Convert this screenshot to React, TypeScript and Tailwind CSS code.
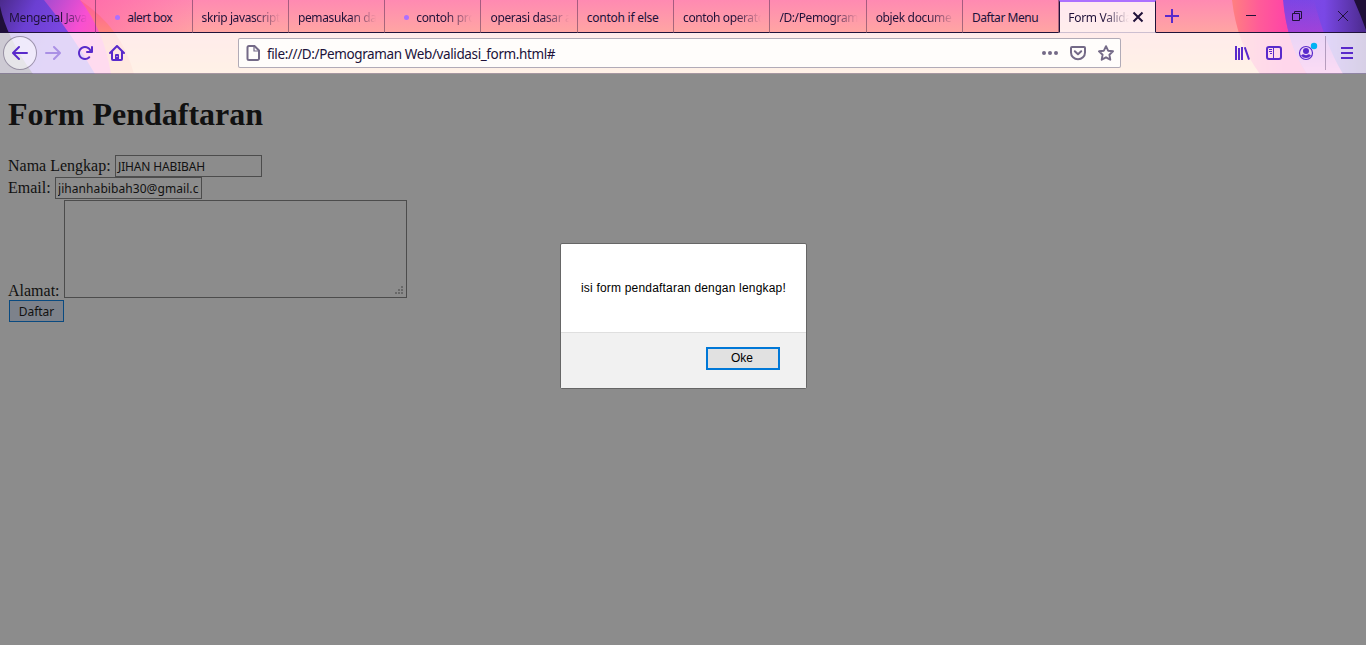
import type { ReactNode } from "react";

type Tab = { title: string; fit: string; dot?: boolean; fade?: boolean };

const tabs: Tab[] = [
  { title: "Mengenal Java", fit: "tracking-[-0.35px]", fade: true },
  { title: "alert box", fit: "tracking-[-0.55px]", dot: true },
  { title: "skrip javascript", fit: "tracking-[-0.4px]", fade: true },
  { title: "pemasukan da", fit: "tracking-[-0.35px]", fade: true },
  { title: "contoh pro", fit: "tracking-[-0.3px]", dot: true, fade: true },
  { title: "operasi dasar a", fit: "tracking-[-0.35px]", fade: true },
  { title: "contoh if else", fit: "tracking-[-0.25px]" },
  { title: "contoh operato", fit: "tracking-[-0.4px]", fade: true },
  { title: "/D:/Pemogram", fit: "tracking-[-0.4px]", fade: true },
  { title: "objek docume", fit: "tracking-[-0.35px]", fade: true },
  { title: "Daftar Menu", fit: "tracking-[-0.45px]" },
];

const fadeMask = "[mask-image:linear-gradient(to_left,transparent,black_26px)]";

function Icon({ children, className = "" }: { children: ReactNode; className?: string }) {
  return (
    <svg viewBox="0 0 16 16" width="16" height="16" fill="currentColor" className={`shrink-0 ${className}`}>
      {children}
    </svg>
  );
}

const arrow =
  "M15 7H3.414l4.293-4.293a1 1 0 0 0-1.414-1.414l-6 6a1 1 0 0 0 0 1.414l6 6a1 1 0 0 0 1.414-1.414L3.414 9H15a1 1 0 0 0 0-2z";

function ThemeBackdrop() {
  return (
    <svg className="col-start-1 row-start-1" width="1366" height="74" viewBox="0 0 1366 74">
      <defs>
        <linearGradient id="base" x1="0" y1="0" x2="0" y2="1">
          <stop offset="0" stopColor="#ff8ab2" />
          <stop offset="0.43" stopColor="#ffa5a3" />
          <stop offset="1" stopColor="#ffc08f" />
        </linearGradient>
        <linearGradient id="glow" x1="0" y1="0" x2="1" y2="0">
          <stop offset="0" stopColor="#ff5fa6" stopOpacity="0.7" />
          <stop offset="1" stopColor="#ff5fa6" stopOpacity="0" />
        </linearGradient>
        <linearGradient id="orangeL" x1="0" y1="0" x2="0" y2="1">
          <stop offset="0" stopColor="#ff5a9a" />
          <stop offset="0.4" stopColor="#ff8280" />
          <stop offset="1" stopColor="#ffa070" />
        </linearGradient>
        <linearGradient id="magentaL" gradientUnits="userSpaceOnUse" x1="50" y1="0" x2="105" y2="30">
          <stop offset="0" stopColor="#b04bd0" />
          <stop offset="0.6" stopColor="#f84fd2" />
          <stop offset="1" stopColor="#ff5cb8" />
        </linearGradient>
        <linearGradient id="violetL" gradientUnits="userSpaceOnUse" x1="0" y1="0" x2="60" y2="30">
          <stop offset="0" stopColor="#4b2a8c" />
          <stop offset="0.5" stopColor="#6b3fd2" />
          <stop offset="1" stopColor="#7a46e0" />
        </linearGradient>
        <linearGradient id="orangeR" gradientUnits="userSpaceOnUse" x1="1232" y1="0" x2="1285" y2="0">
          <stop offset="0" stopColor="#ff8080" />
          <stop offset="0.5" stopColor="#ff5c98" />
          <stop offset="1" stopColor="#ff45a6" />
        </linearGradient>
        <linearGradient id="violetR" gradientUnits="userSpaceOnUse" x1="1290" y1="0" x2="1366" y2="0">
          <stop offset="0" stopColor="#7d45e4" />
          <stop offset="0.45" stopColor="#7a48e6" />
          <stop offset="1" stopColor="#4b2a8c" />
        </linearGradient>
        <linearGradient id="pinkR" x1="0" y1="0" x2="0" y2="1">
          <stop offset="0" stopColor="#b83fd0" stopOpacity="0" />
          <stop offset="0.43" stopColor="#b83fd0" stopOpacity="0.6" />
          <stop offset="1" stopColor="#f060d0" />
        </linearGradient>
      </defs>
      <rect width="1366" height="74" fill="url(#base)" />
      <rect x="80" width="120" height="32" fill="url(#glow)" />
      <path d="M0 0H80Q122 28 134 74H0Z" fill="url(#orangeL)" />
      <path d="M0 0H80Q104 30 111 74H0Z" fill="url(#magentaL)" />
      <path d="M0 0H44Q72 34 95 74H0Z" fill="url(#violetL)" />
      <path d="M0 6Q6 36 33 74H0Z" fill="#1f0f38" />
      <path d="M1232 0Q1237 44 1260 74H1366V0Z" fill="url(#orangeR)" />
      <path d="M1283 0Q1287 44 1307 74H1366V0Z" fill="url(#violetR)" />
      <path d="M1283 0Q1287 44 1307 74H1343Q1325 44 1314 0Z" fill="url(#pinkR)" />
      <path d="M1354 0Q1361 16 1366 30V0Z" fill="#1f0f38" />
    </svg>
  );
}

function TabStrip() {
  return (
    <div className="flex h-[33px] text-[12px] text-[#20123a]">
      {tabs.map((t) => (
        <div
          key={t.title}
          className="flex w-[96.3px] shrink-0 items-center border-r border-b border-r-[#20123a]/40 border-b-[#20123a] pt-[4px] pr-2 pl-[9px]"
        >
          {t.dot && <span className="mr-[7px] mb-[2px] ml-[10px] size-[5px] shrink-0 rounded-full bg-[#ac70ff]" />}
          <span className={`min-w-0 flex-1 overflow-hidden whitespace-nowrap ${t.fit} ${t.fade ? fadeMask : ""}`}>
            {t.title}
          </span>
        </div>
      ))}
      <div className="flex w-[97px] shrink-0 items-center border-x border-t-2 border-b border-x-[#20123a] border-t-[#ac70ff] border-b-[#cdbfd0] bg-white/80 pt-[2px] pr-[11px] pl-[8px]">
        <span className={`min-w-0 flex-1 overflow-hidden tracking-[-0.3px] whitespace-nowrap ${fadeMask}`}>
          Form Valida
        </span>
        <svg
          width="12"
          height="12"
          viewBox="0 0 12 12"
          className="mb-[3px] ml-[3px] shrink-0"
          stroke="#20123a"
          strokeWidth="2"
        >
          <path d="M1.500 1.500L10.500 10.500M10.500 1.500L1.500 10.500" />
        </svg>
      </div>
      <div className="flex flex-1 items-center border-b border-[#20123a] pl-2">
        <svg width="16" height="16" viewBox="0 0 16 16" stroke="#592acb" strokeWidth="2">
          <path d="M8 1V15M1 8H15" />
        </svg>
        <svg width="10" height="10" viewBox="0 0 10 10" className="ml-[66px]" stroke="#20123a">
          <path d="M0 4.500H10" />
        </svg>
        <svg width="10" height="10" viewBox="0 0 10 10" className="ml-[36px]" fill="none" stroke="#20123a">
          <path d="M0.500 2.500H7.500V9.500H0.500ZM2.500 2V0.500H9.500V7.500H8" />
        </svg>
        <svg width="10" height="10" viewBox="0 0 10 10" className="ml-[36px]" stroke="#20123a">
          <path d="M0 0L10 10M10 0L0 10" />
        </svg>
      </div>
    </div>
  );
}

function Toolbar() {
  return (
    <div className="flex h-[41px] items-center border-b border-[#20123a]/40 bg-white/78 text-[#592acb]">
      <div className="ml-[3px] flex size-[34px] items-center justify-center rounded-full border border-[#20123a]/40 bg-white/50">
        <Icon>
          <path d={arrow} />
        </Icon>
      </div>
      <Icon className="ml-2 -scale-x-100 opacity-40">
        <path d={arrow} />
      </Icon>
      <Icon className="ml-4">
        <path d="M15 1a1 1 0 0 0-1 1v2.418A6.995 6.995 0 1 0 8 15a6.954 6.954 0 0 0 4.95-2.05 1 1 0 0 0-1.414-1.414A5.019 5.019 0 1 1 12.549 6H10a1 1 0 0 0 0 2h5a1 1 0 0 0 1-1V2a1 1 0 0 0-1-1z" />
      </Icon>
      <Icon className="ml-4">
        <path
          d="M15.707 7.293l-7-7a1 1 0 0 0-1.414 0l-7 7a1 1 0 0 0 1.414 1.414L2 8.414V14a2 2 0 0 0 2 2h8a2 2 0 0 0 2-2V8.414l.293.293a1 1 0 0 0 1.414-1.414zM12 14h-2v-4a1 1 0 0 0-1-1H7a1 1 0 0 0-1 1v4H4V6.414l4-4 4 4zM7.500 11h1v1h-1z"
          fillRule="evenodd"
        />
      </Icon>
      <div className="ml-[113px] flex h-[30px] w-[883px] items-center rounded-[2px] border border-[#20123a]/35 bg-[#fffdfb] px-[6px] text-[#746a87]">
        <Icon>
          <path
            d="M4 1H9.500L14 5.500V13.500A1.500 1.500 0 0 1 12.500 15H4A1.500 1.500 0 0 1 2.500 13.500V2.500A1.500 1.500 0 0 1 4 1Z"
            fill="none"
            stroke="currentColor"
            strokeWidth="2"
          />
          <path d="M9 1.500V6H13.500" fill="none" stroke="currentColor" strokeWidth="1.200" />
        </Icon>
        <span className="ml-[6px] flex-1 pt-[2px] text-[13.5px] tracking-[-0.38px] whitespace-nowrap text-[#20123a]">
          file:///D:/Pemograman Web/validasi_form.html#
        </span>
        <Icon>
          <circle cx="2" cy="8" r="2" />
          <circle cx="8" cy="8" r="2" />
          <circle cx="14" cy="8" r="2" />
        </Icon>
        <Icon className="ml-3">
          <g fill="none" stroke="currentColor" strokeWidth="2" strokeLinecap="round" strokeLinejoin="round">
            <path d="M2 2H14A1 1 0 0 1 15 3V7.500A7 6.800 0 0 1 1 7.500V3A1 1 0 0 1 2 2Z" />
            <path d="M4.800 6.200L8 9.200L11.200 6.200" />
          </g>
        </Icon>
        <Icon className="ml-3">
          <path
            d="M8 1.200L10.100 5.700L15 6.300L11.400 9.700L12.300 14.700L8 12.300L3.700 14.700L4.600 9.700L1 6.300L5.900 5.700Z"
            fill="none"
            stroke="currentColor"
            strokeWidth="1.900"
            strokeLinejoin="round"
          />
        </Icon>
      </div>
      <Icon className="ml-[113px]">
        <path d="M1 1h2v14H1zM4 3h2v12H4zM7 2h2v13H7zM9.800 2.600L11.700 2L16 14.200L14.100 14.900z" />
      </Icon>
      <Icon className="ml-4">
        <rect x="1" y="2" width="14" height="12" rx="2" fill="none" stroke="currentColor" strokeWidth="2" />
        <path d="M7 2h1v12H7zM3 4h3v1H3zM3 6h3v1H3zM4 8h2v1H4z" />
      </Icon>
      <svg
        width="20"
        height="20"
        viewBox="0 0 20 20"
        className="ml-[14px] shrink-0 overflow-visible"
        fill="currentColor"
      >
        <circle cx="10" cy="10" r="6.500" fill="none" stroke="currentColor" strokeWidth="1.200" />
        <circle cx="10" cy="8" r="3" />
        <path d="M5 12.500Q7 10.500 8 11.500Q10 13 12 11.500Q13 10.500 15 12.500Q13 15 10 15T5 12.500Z" />
        <circle cx="18" cy="3" r="3.200" fill="#00b3f4" />
      </svg>
      <div className="ml-[9px] h-[34px] w-px bg-[#20123a]/30" />
      <Icon className="ml-[13px]">
        <path d="M2 2h12v2H2zM2 7h12v2H2zM2 12h12v2H2z" />
      </Icon>
    </div>
  );
}

const field =
  "h-[22px] w-[147px] overflow-hidden border border-[#4c4c4c] px-[2px] font-['Noto_Sans','Open_Sans',sans-serif] text-[12px] leading-[21px] whitespace-nowrap";

function RegistrationForm() {
  return (
    <main className="flex-1 px-2 pt-[22px] font-['Liberation_Serif',serif] text-[16px] leading-[18px] text-[#111]">
      <h1 className="text-[32px] leading-[37px] font-bold">Form Pendaftaran</h1>
      <div className="mt-[22px] flex h-[22px] items-center">
        <span className="w-[107px]">Nama Lengkap:</span>
        <div className={`${field} tracking-[-0.15px]`}>JIHAN HABIBAH</div>
      </div>
      <div className="flex h-[22px] items-center">
        <span className="w-[47px]">Email:</span>
        <div className={`${field} tracking-[0.07px]`}>
          <div className="overflow-hidden">jihanhabibah30@gmail.com</div>
        </div>
      </div>
      <div className="mt-px flex items-end">
        <span className="w-[56px] translate-y-[2px]">Alamat:</span>
        <div className="flex h-[98px] w-[343px] items-end justify-end border border-[#4c4c4c] p-[2px]">
          <svg width="9" height="9" viewBox="0 0 9 9" fill="#686868">
            <path d="M6 0h2v2H6zM3 3h2v2H3zM6 3h2v2H6zM0 6h2v2H0zM3 6h2v2H3zM6 6h2v2H6z" />
          </svg>
        </div>
      </div>
      <div className="mt-[2px] ml-px flex h-[22px] w-[55px] items-center justify-center border border-[#0a4a80] bg-[#7d828b] pt-[2px] font-['Noto_Sans','Open_Sans',sans-serif] text-[12px]">
        Daftar
      </div>
    </main>
  );
}

function AlertDialog() {
  return (
    <div className="absolute top-[243px] left-[560px] flex h-[146px] w-[247px] flex-col rounded-[2px] border border-[#666] bg-white font-['Liberation_Sans',Arial,sans-serif] text-[12px] text-black">
      <div className="flex h-[88px] items-center pl-[20px]">
        <span className="tracking-[0.19px] whitespace-nowrap">isi form pendaftaran dengan lengkap!</span>
      </div>
      <div className="flex flex-1 items-start justify-end border-t border-[#dfdfdf] bg-[#f1f1f1] pt-[14px] pr-[26px]">
        <button className="flex h-[23px] w-[74px] items-center justify-center border-2 border-[#0078d7] bg-[#e1e1e1] pr-[2px] pb-[2px]">
          Oke
        </button>
      </div>
    </div>
  );
}

export default function App() {
  return (
    <div className="relative flex h-[645px] w-[1366px] flex-col overflow-hidden bg-[#8c8c8c]">
      <header className="grid h-[74px] font-['Noto_Sans','Open_Sans',sans-serif]">
        <ThemeBackdrop />
        <div className="z-10 col-start-1 row-start-1 w-[1366px]">
          <TabStrip />
          <Toolbar />
        </div>
      </header>
      <RegistrationForm />
      <AlertDialog />
    </div>
  );
}
